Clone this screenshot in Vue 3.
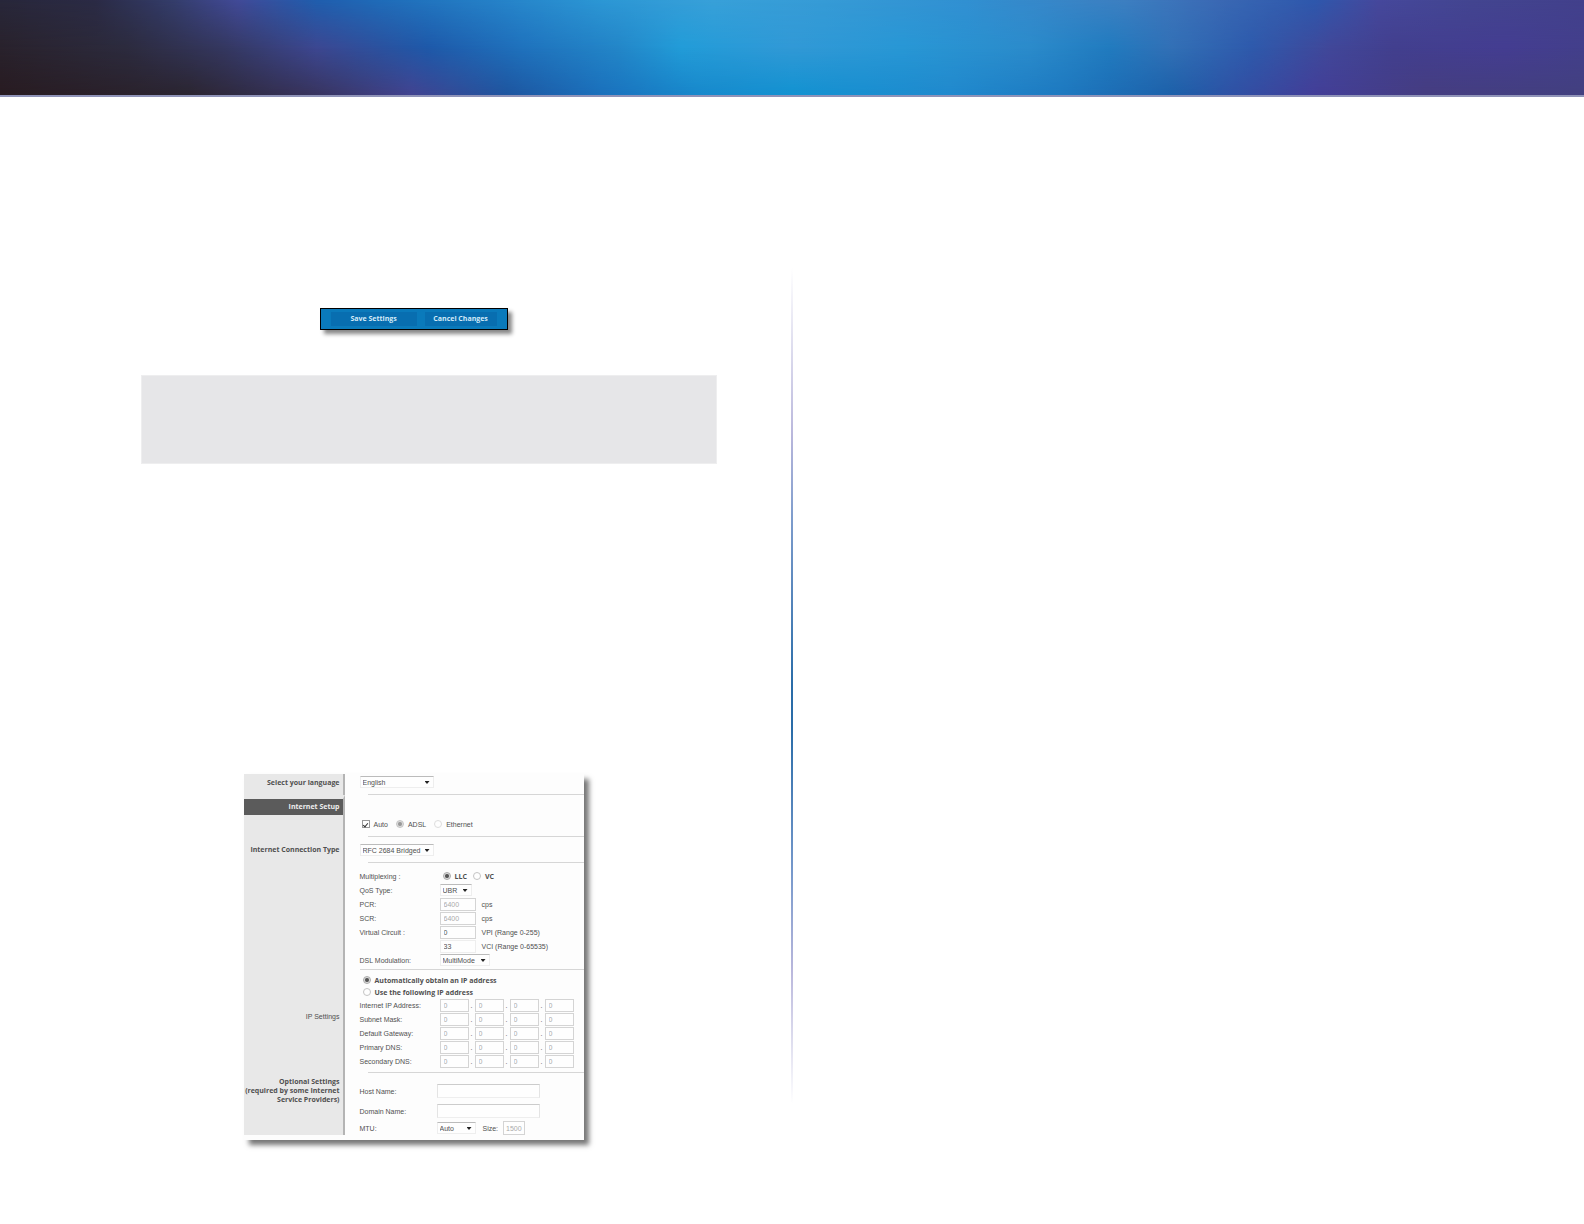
<script setup>
import { reactive } from 'vue'

const form = reactive({
  language: 'English',
  auto: true,
  port: 'ADSL',
  type: 'RFC 2684 Bridged',
  mux: 'LLC',
  qos: 'UBR',
  pcr: '6400',
  scr: '6400',
  vpi: '0',
  vci: '33',
  modulation: 'MultiMode',
  ipMode: 'auto',
  host: '',
  domain: '',
  mtu: 'Auto',
  size: '1500'
})

const addresses = reactive([
  { id: 'ip', label: 'Internet IP Address:', parts: ['0', '0', '0', '0'] },
  { id: 'mask', label: 'Subnet Mask:', parts: ['0', '0', '0', '0'] },
  { id: 'gateway', label: 'Default Gateway:', parts: ['0', '0', '0', '0'] },
  { id: 'dns1', label: 'Primary DNS:', parts: ['0', '0', '0', '0'] },
  { id: 'dns2', label: 'Secondary DNS:', parts: ['0', '0', '0', '0'] }
])
</script>

<template>
  <div class="page">
    <header class="banner"></header>
    <main class="columns">
      <section class="left">
        <div class="actions">
          <button type="button" class="save">Save Settings</button>
          <button type="button" class="cancel">Cancel Changes</button>
        </div>
        <div class="note"></div>
        <form class="panel" @submit.prevent>
          <section class="group">
            <label class="side" for="language">Select your language</label>
            <div class="body first">
              <span class="pick wide">
                <select id="language" v-model="form.language"><option>English</option></select>
              </span>
            </div>
          </section>

          <section class="group ports">
            <h2 class="side heading">Internet Setup</h2>
            <div class="body">
              <div class="row choices">
                <label><input v-model="form.auto" type="checkbox" />Auto</label>
                <label><input v-model="form.port" type="radio" value="ADSL" name="port" />ADSL</label>
                <label><input v-model="form.port" type="radio" value="Ethernet" name="port" />Ethernet</label>
              </div>
            </div>
          </section>

          <section class="group type">
            <label class="side" for="type">Internet Connection Type</label>
            <div class="body">
              <span class="pick wide">
                <select id="type" v-model="form.type"><option>RFC 2684 Bridged</option></select>
              </span>
            </div>
          </section>

          <section class="group full">
            <div class="side"></div>
            <div class="body circuit">
              <div class="row">
                <span class="name">Multiplexing :</span>
                <span class="choices mux">
                  <label><input v-model="form.mux" type="radio" value="LLC" name="mux" />LLC</label>
                  <label><input v-model="form.mux" type="radio" value="VC" name="mux" />VC</label>
                </span>
              </div>
              <div class="row">
                <label class="name" for="qos">QoS Type:</label>
                <span class="pick short"><select id="qos" v-model="form.qos"><option>UBR</option></select></span>
              </div>
              <div class="row">
                <label class="name" for="pcr">PCR:</label>
                <input id="pcr" v-model="form.pcr" class="num dim" /><span>cps</span>
              </div>
              <div class="row">
                <label class="name" for="scr">SCR:</label>
                <input id="scr" v-model="form.scr" class="num dim" /><span>cps</span>
              </div>
              <div class="row">
                <label class="name" for="vpi">Virtual Circuit :</label>
                <input id="vpi" v-model="form.vpi" class="num" /><span>VPI (Range 0-255)</span>
              </div>
              <div class="row">
                <span class="name"></span>
                <input id="vci" v-model="form.vci" class="num plain" /><label for="vci">VCI (Range 0-65535)</label>
              </div>
              <div class="row">
                <label class="name" for="modulation">DSL Modulation:</label>
                <span class="pick medium"><select id="modulation" v-model="form.modulation"><option>MultiMode</option></select></span>
              </div>
            </div>
          </section>

          <section class="group">
            <div class="side middle">IP Settings</div>
            <div class="body ip">
              <label class="mode"><input v-model="form.ipMode" type="radio" value="auto" name="ip" />Automatically obtain an IP address</label>
              <label class="mode"><input v-model="form.ipMode" type="radio" value="manual" name="ip" />Use the following IP address</label>
              <div v-for="row in addresses" :key="row.id" class="row">
                <label class="name" :for="row.id + 0">{{ row.label }}</label>
                <span class="octets">
                  <template v-for="(part, i) in row.parts" :key="i">
                    <span v-if="i" class="dot">.</span>
                    <input :id="row.id + i" v-model="row.parts[i]" class="dim" :aria-label="row.label + ' ' + (i + 1)" />
                  </template>
                </span>
              </div>
            </div>
          </section>

          <section class="group last">
            <div class="side">Optional Settings<br />(required by some Internet<br />Service Providers)</div>
            <div class="body extra">
              <div class="row tall">
                <label class="name" for="host">Host Name:</label>
                <input id="host" v-model="form.host" class="text" />
              </div>
              <div class="row tall">
                <label class="name" for="domain">Domain Name:</label>
                <input id="domain" v-model="form.domain" class="text" />
              </div>
              <div class="row">
                <label class="name" for="mtu">MTU:</label>
                <span class="pick mtu"><select id="mtu" v-model="form.mtu"><option>Auto</option></select></span>
                <label for="size">Size:</label>
                <input id="size" v-model="form.size" class="size dim" />
              </div>
            </div>
          </section>
        </form>
      </section>
      <div class="divider"></div>
      <section class="right"></section>
    </main>
  </div>
</template>

<style>
body {
  margin: 0;
  background: #fff;
}
</style>

<style scoped>
* {
  box-sizing: border-box;
}

.page {
  min-height: 100vh;
  font: 7px/9px "Liberation Sans", Arial, sans-serif;
  color: #505050;
}

.banner {
  position: relative;
  height: 97px;
  border-bottom: 2px solid #8f93b8;
  background: linear-gradient(90deg, #28273a 0%, #2b2b45 6%, #343d6c 11%, #414a98 15%, #1f5eae 20%, #1f6cb9 24%, #2581c8 31%, #2c97d5 38%, #38a0d9 45%, #369bd6 52%, #3190d2 61%, #3d7fc1 71%, #3a69b4 77%, #2e58ad 83%, #46489c 87%, #434590 93%, #42408c 100%);
}

.banner::before,
.banner::after {
  content: "";
  position: absolute;
  inset: 0;
}

.banner::before {
  background: linear-gradient(90deg, #29222c 0%, #2c2b3e 8%, #34375f 14%, #3c4791 20%, #1e59a9 27%, #1f72bd 33%, #2386c8 39%, #229cd8 43%, #3199d6 50%, #2897d5 57%, #2b8bcb 65%, #217bbf 70%, #3270b6 74%, #2e5aac 79%, #414799 84%, #423f8e 88%, #443d91 95%, #433f8b 100%);
  mask-image: linear-gradient(transparent, #000 50%);
}

.banner::after {
  background: linear-gradient(90deg, #281b21 0%, #2b2531 12%, #38345f 20%, #424390 26%, #1e559f 32%, #1a70bc 38%, #1788cb 44%, #1292d1 50%, #2089cd 60%, #1d79c0 67%, #1c60a9 74%, #3050a4 78%, #433e98 83%, #453d80 90%, #42407f 100%);
  mask-image: linear-gradient(transparent 50%, #000);
}

.columns {
  display: grid;
  grid-template-columns: minmax(0, 1fr) 2px minmax(0, 1fr);
  padding: 171px 0 84px;
}

.left {
  display: flex;
  flex-direction: column;
  padding: 40px 74px 0 141px;
}

.divider {
  margin-bottom: 36px;
  background: linear-gradient(#fff, #b9b7dc 20%, #7d9ccc 30%, #2a6ca8 50%, #2a6ca8 55%, #7598cb 72%, #b9b7dc 84%, #fff);
}

.actions {
  align-self: center;
  display: flex;
  gap: 8px;
  width: 188px;
  height: 22px;
  margin-right: 31px;
  padding: 3px 10px;
  border: 1px solid #000;
  background: #0a7abb;
  box-shadow: 4px 4px 4px #888;
}

.actions button {
  padding: 0;
  border: 0;
  background: #086eb0;
  color: #d4ebf8;
  font: bold 7px/14px "Open Sans", "Liberation Sans", sans-serif;
  white-space: nowrap;
}

.save {
  flex: 6;
}

.cancel {
  flex: 5;
}

.note {
  height: 89px;
  margin-top: 45px;
  border: 1px solid #eeeeef;
  background: #e6e6e8;
}

.panel {
  align-self: center;
  width: 340px;
  margin: 310px 31px 0 0;
  padding-bottom: 5px;
  background: #fdfdfd;
  box-shadow: 5px 5px 5px #777;
}

.group {
  display: flex;
}

.side {
  width: 101px;
  padding: 4px 3px 0 0;
  border-right: 2px solid #b4b4b4;
  background: #e8e8e8;
  font-family: "Open Sans", "Liberation Sans", sans-serif;
  font-weight: bold;
  text-align: right;
  white-space: nowrap;
}

.body {
  position: relative;
  flex: 1;
  padding-left: 15px;
}

.group:not(.last) .body::after {
  content: "";
  position: absolute;
  right: 0;
  bottom: 0;
  left: 23px;
  height: 1px;
  background: #d6d6d6;
}

.group.full .body::after {
  left: 15px;
}

.body.first {
  height: 21px;
  padding-top: 2px;
}

.ports .body {
  height: 42px;
  padding-top: 22px;
}

.side.heading {
  margin: 0;
  padding: 0 3px 0 0;
  border-top: 4px solid #e8e8e8;
  background: linear-gradient(#5b5b5b 16px, #e8e8e8 16px);
  color: #eee;
  font-size: 7px;
  line-height: 16px;
}

.type .body {
  height: 26px;
  padding-top: 7px;
}

.type .side {
  padding-top: 8px;
}

.body.circuit {
  padding-top: 6px;
  padding-bottom: 3px;
}

.body.ip {
  padding-top: 4px;
  padding-bottom: 5px;
}

.body.extra {
  padding-top: 8px;
}

.side.middle {
  padding-top: 42px;
  font-family: "Liberation Sans", Arial, sans-serif;
  font-weight: normal;
}

.row {
  display: flex;
  align-items: center;
  height: 14px;
  white-space: nowrap;
}

.row.tall {
  height: 20px;
}

.name {
  width: 80px;
}

.extra .name {
  width: 77px;
}

.choices {
  display: flex;
  gap: 8px;
}

.choices label,
.mode {
  display: flex;
  align-items: center;
  gap: 4px;
}

.mux {
  gap: 6px;
  padding-left: 3px;
  font-family: "Open Sans", "Liberation Sans", sans-serif;
  font-weight: bold;
}

.mode {
  height: 12px;
  padding-left: 3px;
  font-family: "Open Sans", "Liberation Sans", sans-serif;
  font-weight: bold;
}

.row.choices {
  padding-left: 2px;
}

input,
select {
  margin: 0;
  border: 1px solid #d4d4d4;
  border-radius: 0;
  background: #fefefe;
  color: #505050;
  font: 7px/9px "Liberation Sans", Arial, sans-serif;
  appearance: none;
}

input[type="radio"],
input[type="checkbox"] {
  display: grid;
  place-items: center;
  width: 8px;
  height: 8px;
  padding: 0;
  border-color: #c4c4c4;
}

input[type="radio"] {
  border-radius: 50%;
}

input[type="radio"]:checked {
  border-color: #aaa;
  background: radial-gradient(#555 35%, #ddd 60%);
}

.ports input[type="radio"] {
  border-color: #ddd;
}

.ports input[type="radio"]:checked {
  border-color: #c4c4c4;
  background: radial-gradient(#999 35%, #ddd 60%);
}

input[type="checkbox"] {
  border-color: #999;
}

input[type="checkbox"]:checked::before {
  content: "";
  width: 2px;
  height: 4px;
  border: solid #333;
  border-width: 0 1px 1px 0;
  transform: rotate(40deg);
}

.num {
  width: 36px;
  height: 13px;
  margin-right: 6px;
  padding: 0 3px;
}

.num.plain {
  border-color: #eee;
}

input.dim {
  color: #aaa;
}

.octets {
  display: flex;
  align-items: center;
}

.octets input {
  width: 29px;
  height: 13px;
  padding: 0 3px;
}

.dot {
  width: 6px;
  text-align: center;
}

.text {
  width: 103px;
  height: 14px;
  padding: 0 3px;
  border-color: #ccc #e4e4e4 #eee;
}

.pick {
  position: relative;
  display: block;
}

.pick::after {
  content: "";
  position: absolute;
  top: 5px;
  right: 4px;
  width: 5px;
  height: 3px;
  background: #222;
  clip-path: polygon(0 0, 100% 0, 50% 100%);
}

.pick select {
  display: block;
  width: 100%;
  height: 12px;
  padding: 0 2px;
  border-color: #bbb #eee #eee;
}

.wide {
  width: 74px;
}

.short {
  width: 32px;
}

.medium {
  width: 50px;
}

.mtu {
  width: 39px;
  margin-right: 7px;
}

.size {
  width: 22px;
  height: 14px;
  margin-left: 5px;
  padding: 0 2px;
}
</style>
